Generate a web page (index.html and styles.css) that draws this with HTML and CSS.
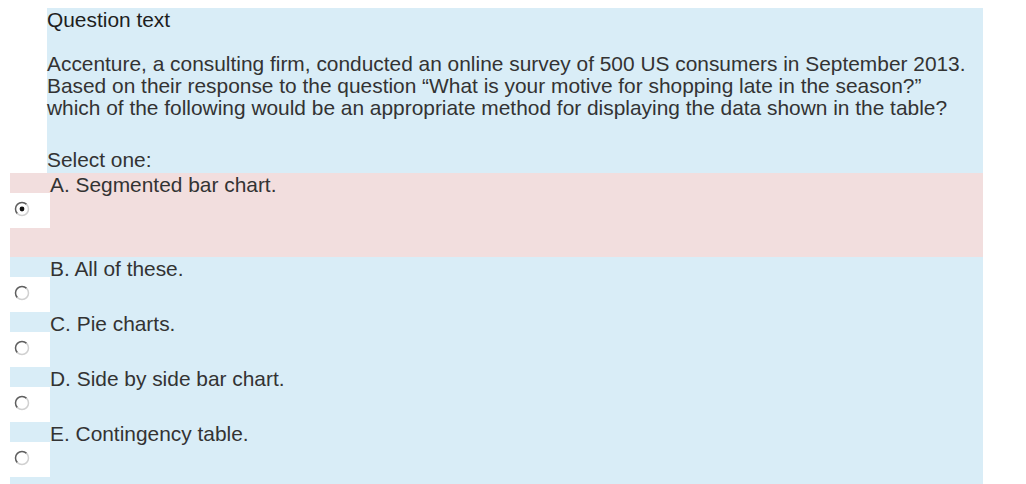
FILE: index.html
```html
<!DOCTYPE html>
<html>
<head>
<meta charset="utf-8">
<link rel="stylesheet" href="styles.css">
</head>
<body>
<div class="que">
  <div class="formulation">
    <h4 class="qhead">Question text</h4>
    <p class="qtext">Accenture, a consulting firm, conducted an online survey of 500 US consumers in September 2013.<br>Based on their response to the question “What is your motive for shopping late in the season?”<br>which of the following would be an appropriate method for displaying the data shown in the table?</p>
    <div class="prompt">Select one:</div>
  </div>
  <div class="answers">
    <div class="opt incorrect">
      <div class="lbl">A. Segmented bar chart.</div>
      <div class="radio"><svg width="16" height="16" viewBox="0 0 16 16"><path d="M12.6 3.4A6.5 6.5 0 0 0 3.4 12.6" fill="none" stroke="#5e5e5e" stroke-width="1.5"/><path d="M3.4 12.6A6.5 6.5 0 0 0 12.6 3.4" fill="none" stroke="#d0d0d0" stroke-width="1.5"/><circle cx="8" cy="8" r="2.4" fill="#111"/></svg></div>
    </div>
    <div class="opt">
      <div class="lbl">B. All of these.</div>
      <div class="radio"><svg width="16" height="16" viewBox="0 0 16 16"><path d="M12.6 3.4A6.5 6.5 0 0 0 3.4 12.6" fill="none" stroke="#5e5e5e" stroke-width="1.5"/><path d="M3.4 12.6A6.5 6.5 0 0 0 12.6 3.4" fill="none" stroke="#d0d0d0" stroke-width="1.5"/></svg></div>
    </div>
    <div class="opt">
      <div class="lbl">C. Pie charts.</div>
      <div class="radio"><svg width="16" height="16" viewBox="0 0 16 16"><path d="M12.6 3.4A6.5 6.5 0 0 0 3.4 12.6" fill="none" stroke="#5e5e5e" stroke-width="1.5"/><path d="M3.4 12.6A6.5 6.5 0 0 0 12.6 3.4" fill="none" stroke="#d0d0d0" stroke-width="1.5"/></svg></div>
    </div>
    <div class="opt">
      <div class="lbl">D. Side by side bar chart.</div>
      <div class="radio"><svg width="16" height="16" viewBox="0 0 16 16"><path d="M12.6 3.4A6.5 6.5 0 0 0 3.4 12.6" fill="none" stroke="#5e5e5e" stroke-width="1.5"/><path d="M3.4 12.6A6.5 6.5 0 0 0 12.6 3.4" fill="none" stroke="#d0d0d0" stroke-width="1.5"/></svg></div>
    </div>
    <div class="opt">
      <div class="lbl">E. Contingency table.</div>
      <div class="radio"><svg width="16" height="16" viewBox="0 0 16 16"><path d="M12.6 3.4A6.5 6.5 0 0 0 3.4 12.6" fill="none" stroke="#5e5e5e" stroke-width="1.5"/><path d="M3.4 12.6A6.5 6.5 0 0 0 12.6 3.4" fill="none" stroke="#d0d0d0" stroke-width="1.5"/></svg></div>
    </div>
  </div>
</div>
</body>
</html>
```
FILE: styles.css
```css
html, body {
  margin: 0;
  padding: 0;
  background: #ffffff;
}
body {
  font-family: "Liberation Sans", Arial, Helvetica, sans-serif;
  font-size: 20.9px;
  color: #333333;
}
.que {
  padding-top: 8px;
  width: 983px;
}
.formulation {
  margin-left: 47px;
  background: #d9edf7;
  padding-top: 1px;
  padding-bottom: 2px;
  line-height: 22px;
}
.qhead {
  margin: 0;
  font-weight: normal;
  font-size: 20.9px;
  color: #1e1e1e;
}
.qtext {
  margin: 22px 0 30px 0;
}
.prompt {
  margin: 0;
}
.answers {
  margin-left: 10px;
  background: #d9edf7;
  padding-bottom: 10px;
}
.opt {
  display: grid;
  grid-template-columns: 40px 1fr;
  grid-template-rows: 20px 35px;
}
.opt.incorrect {
  background: #f2dede;
  padding-bottom: 29px;
}
.lbl {
  grid-column: 2;
  grid-row: 1;
  box-sizing: border-box;
  height: 20px;
  padding-top: 4px;
  line-height: 16px;
  white-space: nowrap;
}
.radio {
  grid-column: 1;
  grid-row: 2;
  background: #ffffff;
  position: relative;
}
.radio svg {
  position: absolute;
  left: 4px;
  top: 8px;
}
```
